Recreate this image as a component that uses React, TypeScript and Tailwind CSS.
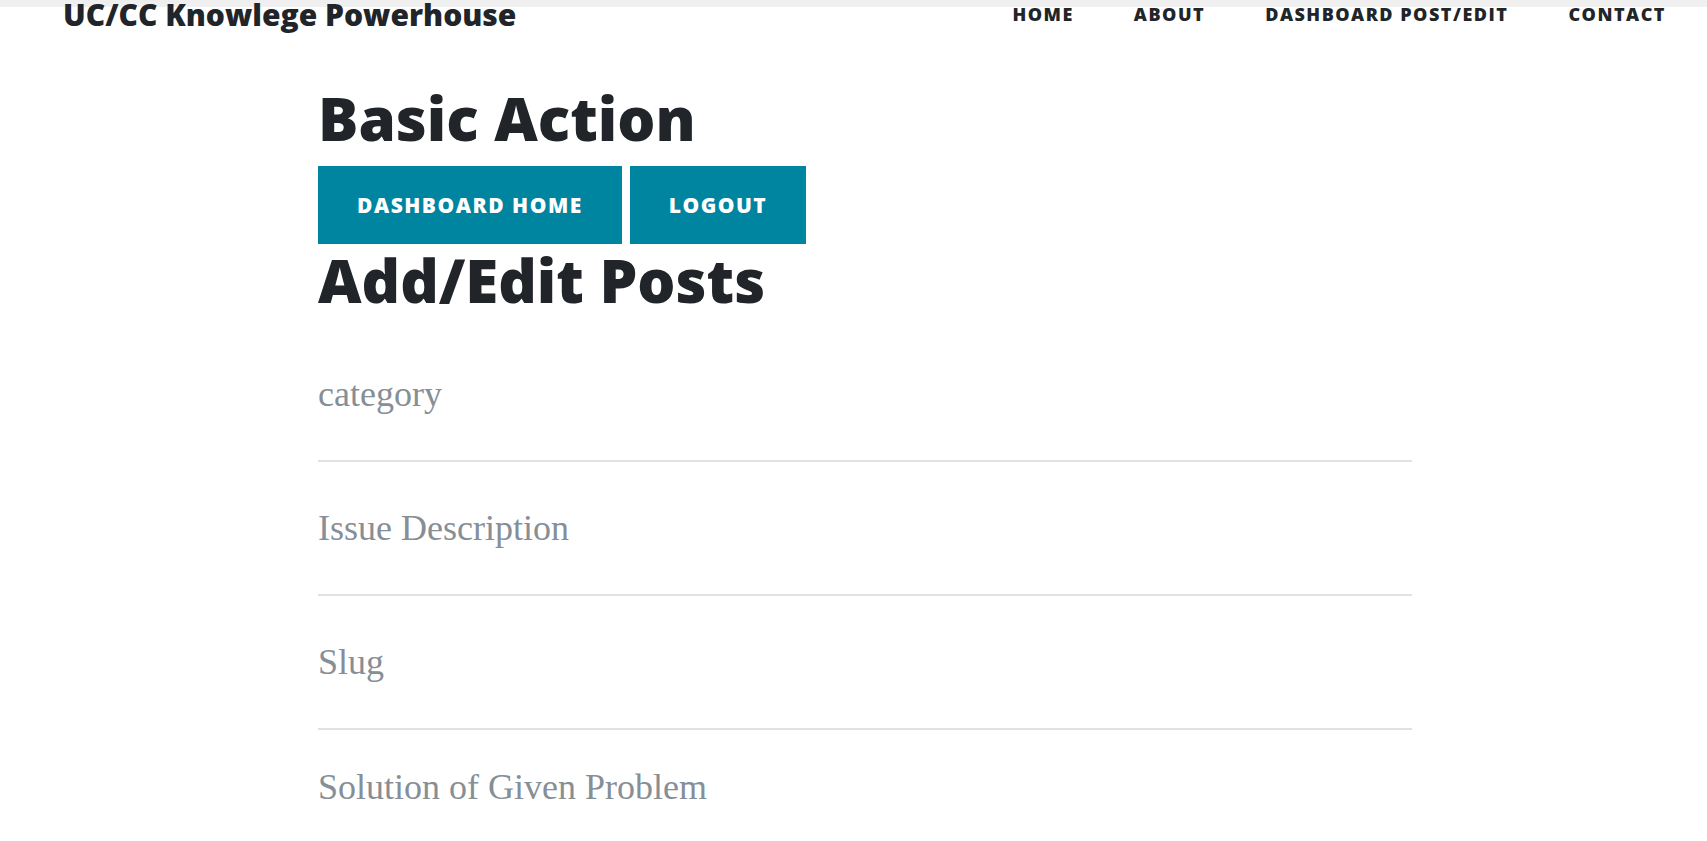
import { useState } from 'react';

const navLinks = ['Home', 'About', 'Dashboard Post/Edit', 'Contact'];
const fields = ['category', 'Issue Description', 'Slug'];

export default function App() {
  const [values, setValues] = useState<Record<string, string>>({});
  const [solution, setSolution] = useState('');

  return (
    <div className="min-h-screen bg-white text-[#212529] font-['Open_Sans',sans-serif]">
      <header className="flex items-start justify-between pl-[63px] pr-[41px] bg-[linear-gradient(to_bottom,#eeeeee_0px,#f1f1f1_7px,#ffffff_7px)]">
        <a href="#" className="text-[30px] leading-[29px] font-extrabold text-[#212529]">
          UC/CC Knowlege Powerhouse
        </a>
        <nav className="flex gap-[60px] pt-[3px]">
          {navLinks.map((link) => (
            <a
              key={link}
              href="#"
              className="text-[18px] leading-[22px] font-extrabold uppercase tracking-[1.5px] text-[#212529]"
            >
              {link}
            </a>
          ))}
        </nav>
      </header>

      <main className="ml-[318px] w-[1094px] pt-[53px]">
        <h1 className="text-[60px] leading-[72px] font-extrabold mb-[12px]">Basic Action</h1>
        <div className="flex gap-2">
          <button className="bg-[#0085a1] text-white text-[21px] leading-[32px] font-extrabold uppercase tracking-[1.5px] px-[39px] py-[23px]">
            Dashboard Home
          </button>
          <button className="bg-[#0085a1] text-white text-[21px] leading-[32px] font-extrabold uppercase tracking-[1.5px] px-[39px] py-[23px]">
            Logout
          </button>
        </div>
        <h1 className="text-[60px] leading-[72px] font-extrabold mb-[12px]">Add/Edit Posts</h1>

        <form className="flex flex-col mt-[2px]">
          {fields.map((name) => (
            <div key={name} className="border-b-2 border-[#dee2e6] pt-[39px] pb-[39px]">
              <input
                type="text"
                placeholder={name}
                value={values[name] ?? ''}
                onChange={(e) => setValues({ ...values, [name]: e.target.value })}
                className="w-full h-[54px] p-0 bg-transparent outline-none text-[36px] font-['Liberation_Serif',serif] text-[#212529] placeholder:text-[#868e96]"
              />
            </div>
          ))}
          <div className="border-b-2 border-[#dee2e6] pt-[30px] pb-[16px]">
            <textarea
              rows={5}
              placeholder="Solution of Given Problem"
              value={solution}
              onChange={(e) => setSolution(e.target.value)}
              className="block w-full p-0 resize-none bg-transparent outline-none text-[36px] leading-[54px] font-['Liberation_Serif',serif] text-[#212529] placeholder:text-[#868e96]"
            />
          </div>
        </form>
      </main>
    </div>
  );
}
